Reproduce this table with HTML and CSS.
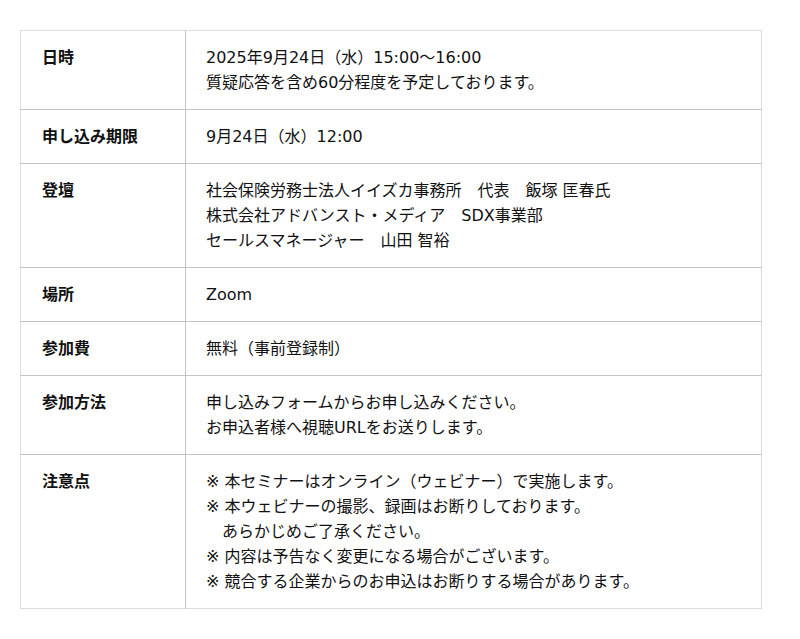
FILE: index.html
```html
<!DOCTYPE html>
<html lang="ja">
<head>
<meta charset="utf-8">
<link rel="stylesheet" href="styles.css">
</head>
<body>
<div class="wrap">
<table class="info">
<tr><th>日時</th><td>2025年9月24日（水）15:00〜16:00<br>質疑応答を含め60分程度を予定しております。</td></tr>
<tr><th>申し込み期限</th><td>9月24日（水）12:00</td></tr>
<tr><th>登壇</th><td>社会保険労務士法人イイズカ事務所　代表　飯塚 匡春氏<br>株式会社アドバンスト・メディア　SDX事業部<br>セールスマネージャー　山田 智裕</td></tr>
<tr><th>場所</th><td>Zoom</td></tr>
<tr><th>参加費</th><td>無料（事前登録制）</td></tr>
<tr><th>参加方法</th><td>申し込みフォームからお申し込みください。<br>お申込者様へ視聴URLをお送りします。</td></tr>
<tr><th>注意点</th><td>※ 本セミナーはオンライン（ウェビナー）で実施します。<br>※ 本ウェビナーの撮影、録画はお断りしております。<br>　あらかじめご了承ください。<br>※ 内容は予告なく変更になる場合がございます。<br>※ 競合する企業からのお申込はお断りする場合があります。</td></tr>
</table>
</div>
</body>
</html>
```
FILE: styles.css
```css
html, body { margin: 0; background: #fff; }
body { font-family: "DejaVu Sans", "Noto Sans CJK JP", sans-serif; color: #111; }
.wrap { padding: 30px 38px 0 20px; }
.info { width: 742px; border-collapse: collapse; border: 1px solid #ddd; }
.info th, .info td { font-size: 16px; line-height: 25px; padding: 14px 20px 14px 21px; vertical-align: top; text-align: left; border-top: 1px solid #c4c4c4; }
.info tr:first-child th, .info tr:first-child td { border-top: 1px solid #ddd; }
.info th { width: 123px; font-weight: bold; border-right: 1px solid #c4c4c4; }
.info td { padding-left: 20px; }
```
